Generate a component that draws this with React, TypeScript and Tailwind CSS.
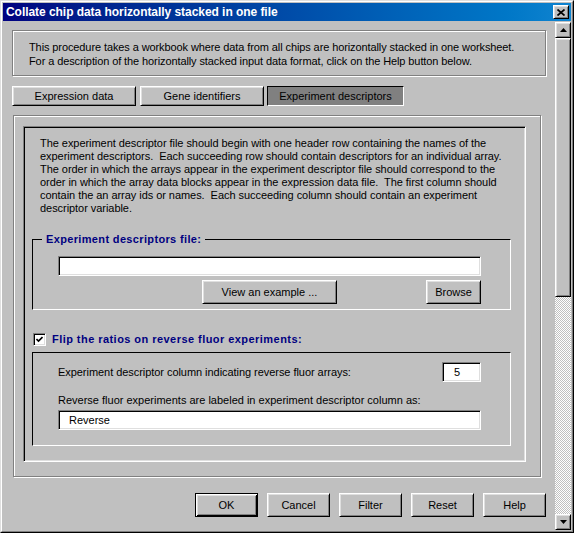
import React from 'react';

// classic 3D borders
const raised =
  'border border-t-white border-l-white border-r-black border-b-black shadow-[inset_1px_1px_0_#dfdfdf,inset_-1px_-1px_0_#808080]';
const sunken =
  'border border-t-[#808080] border-l-[#808080] border-r-white border-b-white shadow-[inset_1px_1px_0_#000,inset_-1px_-1px_0_#dfdfdf]';
const etched = 'border border-[#808080] shadow-[inset_1px_1px_0_#fff,1px_1px_0_#fff]';
const groupBox = 'border border-t-black border-l-black border-r-white border-b-white';

const PARAGRAPH = [
  'The experiment descriptor file should begin with one header row containing the names of the',
  'experiment descriptors.  Each succeeding row should contain descriptors for an individual array.',
  'The order in which the arrays appear in the experiment descriptor file should correspond to the',
  'order in which the array data blocks appear in the expression data file.  The first column should',
  'contain the an array ids or names.  Each succeeding column should contain an experiment',
  'descriptor variable.',
];

function Button({ label, width = 'w-[63px]', isDefault = false }: { label: string; width?: string; isDefault?: boolean }) {
  const frame = isDefault
    ? 'border border-black shadow-[inset_1px_1px_0_#fff,inset_-1px_-1px_0_#000,inset_2px_2px_0_#dfdfdf,inset_-2px_-2px_0_#808080]'
    : raised;
  return (
    <div className={`${width} h-[24px] ${frame} bg-[#c0c0c0] flex items-center justify-center text-black`}>
      {label}
    </div>
  );
}

function Tab({ label, width, active = false }: { label: string; width: string; active?: boolean }) {
  return (
    <div
      className={`${width} h-[20px] flex items-center justify-center ${
        active ? 'bg-[#808080] border border-t-black border-l-black border-r-white border-b-white' : raised
      }`}
    >
      {label}
    </div>
  );
}

function ArrowButton({ up, className = '' }: { up: boolean; className?: string }) {
  return (
    <div className={`w-[16px] h-[16px] ${raised} bg-[#c0c0c0] flex items-center justify-center ${className}`}>
      <svg width="7" height="4" viewBox="0 0 7 4">
        {up ? <path d="M3.5 0L7 4H0Z" fill="#000" /> : <path d="M0 0H7L3.5 4Z" fill="#000" />}
      </svg>
    </div>
  );
}

export default function App() {
  return (
    <div className="w-[574px] h-[533px] bg-[#c0c0c0] border border-t-[#dfdfdf] border-l-[#dfdfdf] border-r-black border-b-black font-['Liberation_Sans',Arial,sans-serif] text-[11px] text-black">
      <div className="h-full border border-t-white border-l-white border-r-[#808080] border-b-[#808080] p-px flex flex-col">
        {/* Title bar */}
        <div className="h-[18px] shrink-0 bg-linear-to-r from-[#000080] to-[#1084d0] flex items-center pl-[3px] pr-[2px]">
          <span className="text-white font-bold text-[12px] tracking-[-0.05px] whitespace-nowrap">
            Collate chip data horizontally stacked in one file
          </span>
          <div className={`ml-auto w-[16px] h-[14px] ${raised} bg-[#c0c0c0] flex items-center justify-center`}>
            <svg width="8" height="7" viewBox="0 0 8 7">
              <path d="M0.5 0.5L7.5 6.5M7.5 0.5L0.5 6.5" stroke="#000" strokeWidth="1.7" />
            </svg>
          </div>
        </div>

        {/* Body */}
        <div className="flex-1 flex min-h-0">
          <div className="w-[552px] shrink-0 pt-[9px] px-[9px] flex flex-col">
            {/* intro */}
            <div className={`h-[46px] ${etched} pl-[16px] pt-[9px] leading-[14px] tracking-[-0.1px] whitespace-nowrap`}>
              <div>This procedure takes a workbook where data from all chips are horizontally stacked in one worksheet.</div>
              <div>For a description of the horizontally stacked input data format, click on the Help button below.</div>
            </div>

            {/* tabs */}
            <div className="mt-[10px] flex">
              <Tab label="Expression data" width="w-[124px]" />
              <div className="w-[4px]" />
              <Tab label="Gene identifiers" width="w-[124px]" />
              <div className="w-[3px]" />
              <Tab label="Experiment descriptors" width="w-[137px]" active />
            </div>

            {/* tab page */}
            <div className={`mt-[9px] ml-px w-[528px] h-[362px] ${etched} pl-[9px] pt-[10px]`}>
              <div className={`w-[503px] h-[336px] ${sunken} pt-[10px] pl-[8px]`}>
                <div className="pl-[8px] leading-[13px] tracking-[-0.05px] whitespace-pre">
                  {PARAGRAPH.map((line) => (
                    <div key={line}>{line}</div>
                  ))}
                </div>

                {/* file group */}
                <div className={`relative mt-[24px] w-[479px] h-[71px] ${groupBox} pl-[25px] pt-[16px]`}>
                  <span className="absolute left-[9px] top-[-8px] px-[4px] bg-[#c0c0c0] font-bold text-[#000080] leading-[14px] tracking-[0.35px]">
                    Experiment descriptors file:
                  </span>
                  <div className={`w-[423px] h-[20px] ${sunken} bg-white`} />
                  <div className="w-[423px] mt-[4px] flex">
                    <div className="ml-[144px]">
                      <Button label="View an example ..." width="w-[135px]" />
                    </div>
                    <div className="ml-auto">
                      <Button label="Browse" width="w-[55px]" />
                    </div>
                  </div>
                </div>

                {/* flip checkbox */}
                <div className="mt-[23px] ml-px flex items-center h-[13px]">
                  <div className={`w-[13px] h-[13px] ${sunken} bg-white flex items-center justify-center`}>
                    <svg width="7" height="7" viewBox="0 0 7 7">
                      <path d="M0.5 3L2.5 5L6.5 1" stroke="#000" strokeWidth="1.6" fill="none" />
                    </svg>
                  </div>
                  <span className="ml-[6px] font-bold text-[#000080] tracking-[0.45px] whitespace-nowrap">
                    Flip the ratios on reverse fluor experiments:
                  </span>
                </div>

                {/* reverse group */}
                <div className={`mt-[6px] w-[479px] h-[94px] ${groupBox} pl-[25px] pt-[9px]`}>
                  <div className="w-[423px] h-[20px] flex items-center justify-between">
                    <span className="whitespace-nowrap tracking-[-0.05px]">
                      Experiment descriptor column indicating reverse fluor arrays:
                    </span>
                    <div className={`w-[39px] h-[20px] ${sunken} bg-white flex items-center pl-[11px]`}>5</div>
                  </div>
                  <div className="mt-[12px] leading-[13px] whitespace-nowrap">
                    Reverse fluor experiments are labeled in experiment descriptor column as:
                  </div>
                  <div className={`mt-[3px] w-[423px] h-[20px] ${sunken} bg-white flex items-center pl-[10px]`}>
                    Reverse
                  </div>
                </div>
              </div>
            </div>

            {/* dialog buttons */}
            <div className="mt-[16px] flex justify-end gap-[9px]">
              <Button label="OK" isDefault />
              <Button label="Cancel" />
              <Button label="Filter" />
              <Button label="Reset" />
              <Button label="Help" />
            </div>
          </div>

          {/* scrollbar */}
          <div className="w-[16px] shrink-0 mt-px flex flex-col">
            <ArrowButton up />
            <div className={`h-[259px] shrink-0 ${raised} bg-[#c0c0c0]`} />
            <div className="flex-1 bg-[repeating-conic-gradient(#ffffff_0%_25%,#c0c0c0_0%_50%)] bg-size-[2px_2px]" />
            <ArrowButton up={false} />
          </div>
        </div>
      </div>
    </div>
  );
}
